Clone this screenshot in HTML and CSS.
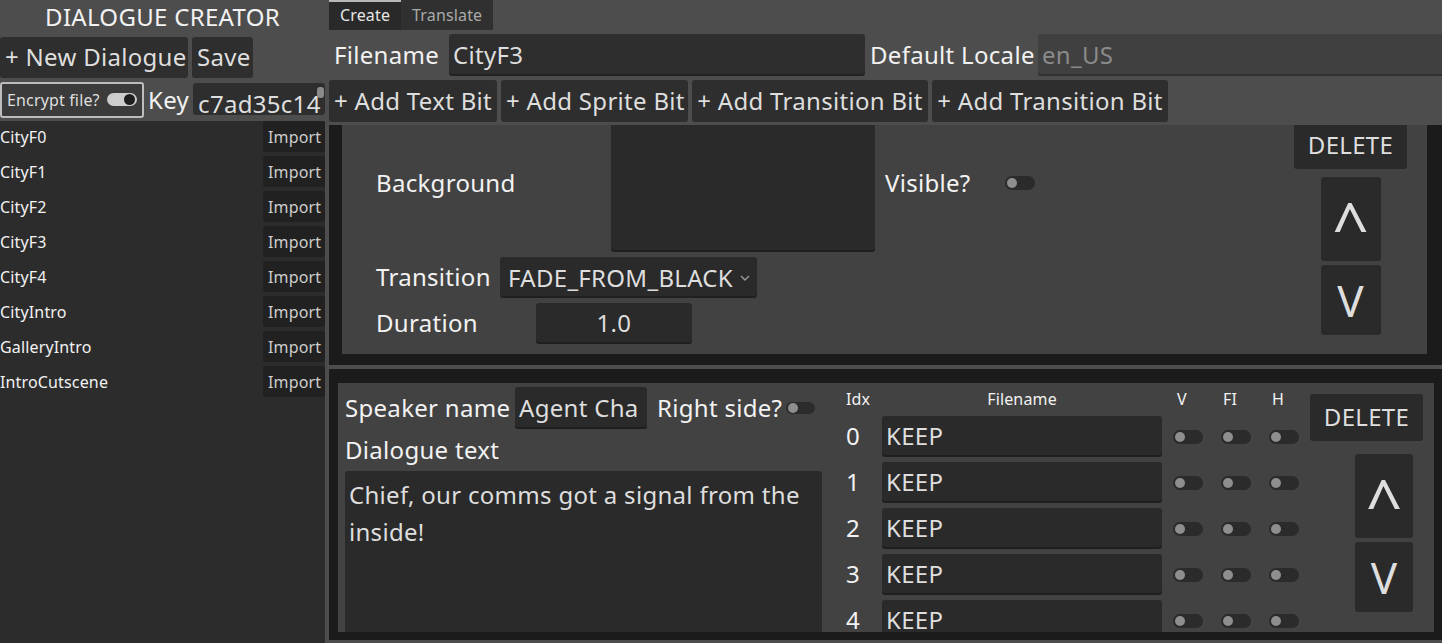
FILE: index.html
```html
<!DOCTYPE html>
<html lang="en">
<head>
  <meta charset="UTF-8">
  <title>Dialogue Creator</title>
  <link rel="stylesheet" href="styles.css">
</head>
<body>
  <div id="app">
    <div id="sidebar">
      <h1>DIALOGUE CREATOR</h1>
      <div class="row">
        <button class="btn new">+ New Dialogue</button>
        <button class="btn save">Save</button>
      </div>
      <div class="row keyrow">
        <button class="btn encrypt">Encrypt file? <span class="switch on"></span></button>
        <span class="keylbl">Key</span>
        <div class="keybox">c7ad35c14<span class="grabber"></span></div>
      </div>
      <ul id="files">
        <li><span>CityF0</span><button class="btn import">Import</button></li>
        <li><span>CityF1</span><button class="btn import">Import</button></li>
        <li><span>CityF2</span><button class="btn import">Import</button></li>
        <li><span>CityF3</span><button class="btn import">Import</button></li>
        <li><span>CityF4</span><button class="btn import">Import</button></li>
        <li><span>CityIntro</span><button class="btn import">Import</button></li>
        <li><span>GalleryIntro</span><button class="btn import">Import</button></li>
        <li><span>IntroCutscene</span><button class="btn import">Import</button></li>
      </ul>
    </div>

    <div id="main">
      <div class="tabs">
        <span class="tab active">Create</span>
        <span class="tab">Translate</span>
      </div>

      <div class="row filerow">
        <span class="lbl w-fn">Filename</span>
        <div class="field fname">CityF3</div>
        <span class="lbl w-loc">Default Locale</span>
        <div class="field locale">en_US</div>
      </div>

      <div class="row addrow">
        <button class="btn add-text">+ Add Text Bit</button>
        <button class="btn add-sprite">+ Add Sprite Bit</button>
        <button class="btn add-trans">+ Add Transition Bit</button>
        <button class="btn add-trans">+ Add Transition Bit</button>
      </div>

      <!-- transition bit, scrolled to its bottom -->
      <div class="scroll top">
        <div class="view">
          <div class="bit trans">
            <div class="bitbody">
              <div class="trow bgrow">
                <span class="lbl w-bg">Background</span>
                <div class="field bgbox"></div>
                <span class="lbl w-vis">Visible?</span>
                <span class="switch"></span>
              </div>
              <div class="trow">
                <span class="lbl w-tr">Transition</span>
                <div class="field select">FADE_FROM_BLACK
                  <svg width="10" height="6" viewBox="0 0 10 6"><path d="M1 1l4 4 4-4" fill="none" stroke="#9a9a9a" stroke-width="1.4"/></svg>
                </div>
              </div>
              <div class="trow">
                <span class="lbl w-dur">Duration</span>
                <div class="field spin">1.0</div>
              </div>
            </div>
            <div class="side">
              <button class="btn del">DELETE</button>
              <button class="btn arrow up">^</button>
              <button class="btn arrow down">V</button>
            </div>
          </div>
        </div>
      </div>

      <!-- text bit -->
      <div class="scroll bottom">
        <div class="view">
          <div class="bit textbit">
            <div class="speech">
              <div class="srow">
                <span class="lbl w-sp">Speaker name</span>
                <div class="field speaker">Agent Cha</div>
                <span class="lbl rside">Right side?</span>
                <span class="switch small"></span>
              </div>
              <div class="srow">
                <span class="lbl">Dialogue text</span>
              </div>
              <div class="field textarea">Chief, our comms got a signal from the inside!</div>
            </div>

            <div class="sprites">
              <span class="th idx">Idx</span>
              <span class="th center">Filename</span>
              <span class="th tog">V</span>
              <span class="th tog">FI</span>
              <span class="th tog">H</span>

              <span class="num">0</span><div class="field keep">KEEP</div>
              <span class="cell"><span class="switch"></span></span><span class="cell"><span class="switch"></span></span><span class="cell"><span class="switch"></span></span>

              <span class="num">1</span><div class="field keep">KEEP</div>
              <span class="cell"><span class="switch"></span></span><span class="cell"><span class="switch"></span></span><span class="cell"><span class="switch"></span></span>

              <span class="num">2</span><div class="field keep">KEEP</div>
              <span class="cell"><span class="switch"></span></span><span class="cell"><span class="switch"></span></span><span class="cell"><span class="switch"></span></span>

              <span class="num">3</span><div class="field keep">KEEP</div>
              <span class="cell"><span class="switch"></span></span><span class="cell"><span class="switch"></span></span><span class="cell"><span class="switch"></span></span>

              <span class="num">4</span><div class="field keep">KEEP</div>
              <span class="cell"><span class="switch"></span></span><span class="cell"><span class="switch"></span></span><span class="cell"><span class="switch"></span></span>
            </div>

            <div class="side side2">
              <button class="btn del">DELETE</button>
              <button class="btn arrow up">^</button>
              <button class="btn arrow down">V</button>
            </div>
          </div>
        </div>
      </div>
    </div>
  </div>
</body>
</html>
```

FILE: styles.css
```css
body {
  margin: 0; height: 643px; overflow: hidden;
  background: #4d4d4d; color: #f2f2f2;
  font-family: "Noto Sans", "Open Sans", sans-serif; font-size: 24px; letter-spacing: .3px;
}
#app { display: flex; gap: 4px; height: 643px; }

/* generic controls */
.row { display: flex; gap: 4px; align-items: center; }
.btn {
  font: inherit; letter-spacing: inherit; color: #dedede; background: rgba(26, 26, 26, .6);
  border: 0; border-radius: 3px; padding: 0 5px 2px; height: 41px; cursor: pointer;
  white-space: nowrap;
}
.field {
  background: rgba(26, 26, 26, .6); color: #dedede;
  border-radius: 3px; box-shadow: inset 0 -2px 0 rgba(0, 0, 0, .25);
  padding: 0 4px; height: 41px; line-height: 39px; box-sizing: border-box;
  white-space: nowrap; overflow: hidden;
}
.lbl { white-space: nowrap; line-height: 1.25; padding-bottom: 1px; }
.switch {
  display: inline-block; position: relative; vertical-align: middle;
  width: 30px; height: 14px; border-radius: 7px; background: #2b2b2b;
}
.switch::after {
  content: ""; position: absolute; left: 2px; top: 2px;
  width: 10px; height: 10px; border-radius: 50%; background: #8e8e8e;
}
.switch.on { background: #cdcdcd; width: 31px; height: 13px; }
.switch.on::after { left: auto; right: 2px; top: 1px; width: 11px; height: 11px; background: #1e1e1e; }
.switch.small { width: 29px; height: 12px; }
.switch.small::after { top: 1px; }

/* sidebar */
#sidebar { width: 325px; display: flex; flex-direction: column; }
h1 { margin: 0 0 3px; height: 34px; line-height: 33px; font-size: 24px; font-weight: normal; text-align: center; }
.new { width: 188px; }
.save { width: 61px; }
.keyrow { margin-top: 4px; height: 36px; }
.encrypt {
  height: 36px; width: 144px; font-size: 16px; letter-spacing: .15px; padding: 0 5px 1px;
  border: 2px solid #bdbdbd; background: #3b3b3b;
  display: flex; align-items: center; gap: 7px;
}
.keylbl { font-size: 24px; padding-bottom: 2px; }
.keybox {
  position: relative; flex: 1; height: 32px; margin-top: 1px; align-self: flex-start;
  background: rgba(26, 26, 26, .6); border-radius: 3px; color: #dedede;
  padding: 4px 5px 0; box-sizing: border-box; line-height: 33px; overflow: hidden;
}
.grabber {
  position: absolute; right: 1px; top: 4px; width: 7px; height: 11px;
  border-radius: 3px; background: #8a8a8a;
}
#files {
  list-style: none; margin: 3px 0 0; padding: 0; flex: 1;
  background: #2c2c2c; font-size: 16px; letter-spacing: .15px;
}
#files li { display: flex; justify-content: space-between; align-items: center; height: 31px; margin-bottom: 4px; }
.import { height: 31px; width: 62px; color: #cdcdcd; padding-bottom: 0; }

/* main */
#main { flex: 1; display: flex; flex-direction: column; min-width: 0; }
.tabs { display: flex; height: 30px; }
.tab {
  font-size: 16px; letter-spacing: .15px; line-height: 27px; padding: 0 11px; box-sizing: border-box;
  background: #303030; color: #a9a9a9; border-top: 2px solid transparent;
}
.tab.active { background: #292929; color: #e6e6e6; border-top-color: #b8b8b8; }

.filerow { margin-top: 4px; height: 42px; gap: 0; }
.filerow .lbl { padding-left: 5px; box-sizing: border-box; }
.w-fn { width: 120px; }
.w-loc { width: 173px; }
.fname { width: 416px; height: 42px; line-height: 41px; }
.locale {
  flex: 1; margin-right: -6px; height: 42px; line-height: 41px;
  background: rgba(26, 26, 26, .25); color: #8a8a8a;
}
.addrow { margin-top: 4px; }
.addrow .btn { height: 42px; }
.add-text { width: 168px; }
.add-sprite { width: 187px; }
.add-trans { width: 236px; }

.scroll { background: #1b1b1b; box-sizing: border-box; }
.view { height: 100%; overflow: hidden; }
.scroll.top { margin-top: 3px; height: 240px; padding: 0 15px 11px 13px; }
.scroll.bottom { margin-top: 4px; height: 271px; padding: 14px 8px 8px 9px; }

.bit { background: #424242; display: flex; box-sizing: border-box; }
.trans { margin-top: -15px; height: 244px; padding: 4px 20px 10px 34px; }
.bitbody { flex: 1; }
.trow { display: flex; align-items: center; height: 41px; margin-top: 5px; }
.bgrow { height: 138px; margin-top: 0; }
.w-bg { width: 235px; }
.w-vis { width: 120px; margin-left: 10px; }
.w-tr { width: 124px; }
.w-dur { width: 160px; }
.bgbox { width: 264px; height: 138px; }
.select { width: 257px; padding: 0 7px 0 8px; display: flex; align-items: center; justify-content: space-between; }
.spin { width: 156px; text-align: center; }

.side { display: flex; flex-direction: column; align-items: center; padding-top: 8px; width: 113px; }
.del { width: 113px; height: 47px; }
.arrow { width: 60px; height: 84px; margin-top: 8px; padding: 0; font-size: 44px; line-height: 1; letter-spacing: 0; }
.arrow.up { font-size: 64px; padding-top: 12px; }
.arrow.down { height: 70px; margin-top: 4px; }

.textbit { height: 290px; padding: 4px 11px 0 7px; }
.speech { width: 477px; }
.srow { display: flex; align-items: center; height: 42px; }
.w-sp { width: 170px; }
.speaker { width: 132px; height: 42px; line-height: 41px; }
.rside { margin-left: 10px; margin-right: 4px; }
.textarea {
  height: 200px; padding: 5px 4px; line-height: 37px; white-space: normal;
  border-radius: 3px;
}

.sprites {
  margin-left: 24px; display: grid;
  grid-template-columns: 36px 280px 48px 48px 48px;
  grid-template-rows: 24px repeat(5, 41px);
  row-gap: 5px; align-items: center; align-content: start;
}
.sprites .th { font-size: 16px; letter-spacing: .15px; align-self: center; }
.th.center { text-align: center; }
.th.tog { text-align: center; padding-right: 8px; }
.num { padding-bottom: 3px; }
.keep { height: 41px; }
.cell { padding-left: 11px; display: flex; align-items: center; }

.side2 { margin-left: 4px; align-items: flex-start; padding-top: 7px; }
.side2 .arrow { width: 58px; margin-left: 45px; }
.side2 .arrow.up { margin-top: 13px; }
```
